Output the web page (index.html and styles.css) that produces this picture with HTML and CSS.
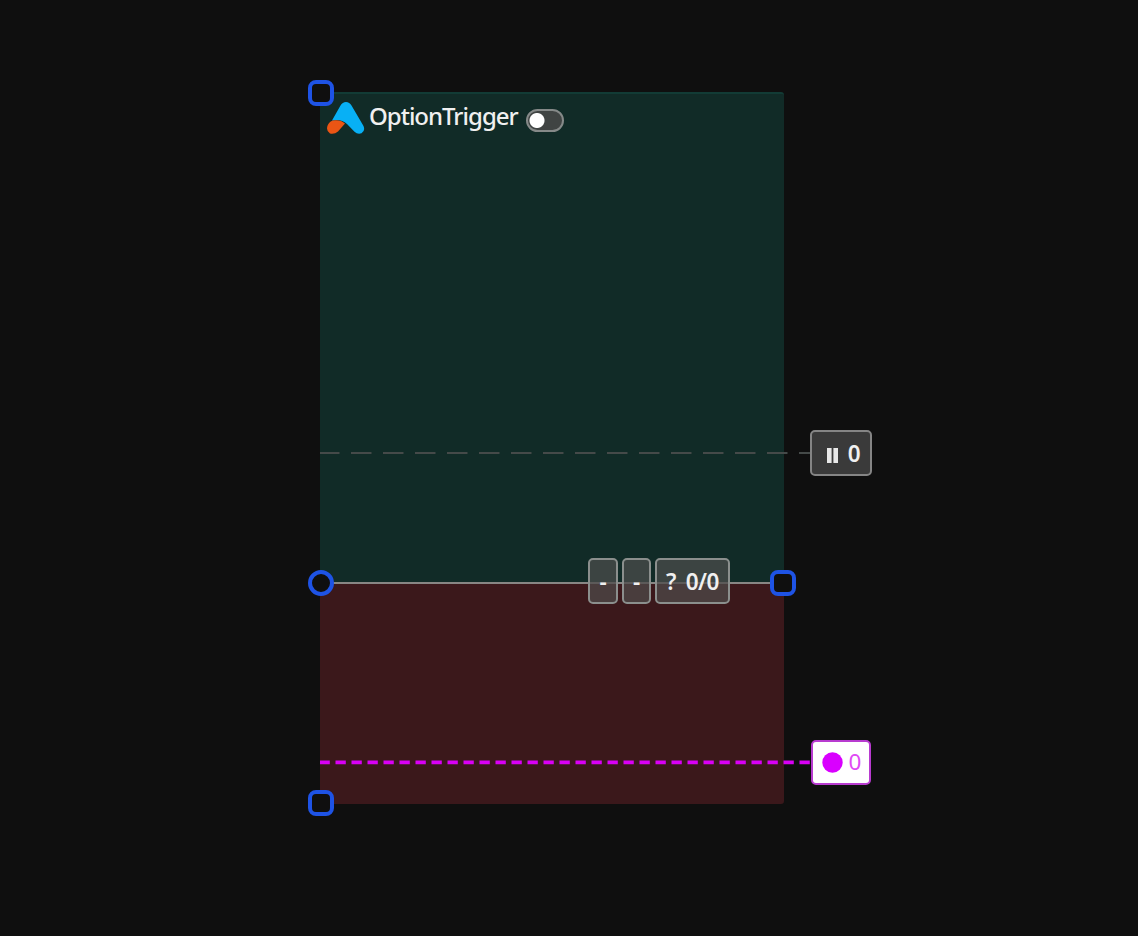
FILE: index.html
```html
<!DOCTYPE html>
<html lang="en">
<head>
  <meta charset="UTF-8">
  <meta name="viewport" content="width=device-width, initial-scale=1.0">
  <title>OptionTrigger</title>
  <link rel="stylesheet" href="styles.css">
</head>
<body>
  <div class="position">
    <!-- Profit zone -->
    <div class="profit">
      <div class="title">
        <svg class="logo" width="38" height="34" viewBox="0 0 38 34">
          <path d="M5 19.5 L13.5 4.5 Q15.5 1 19 1 Q22.5 1 24.5 4.5 L36.5 25 Q38.5 30 34.5 32.3 Q30.5 33.5 27.5 30.8 L20 23 Q14 17.5 5 19.5 Z" fill="#08b0f5"/>
          <path d="M.8 24 Q3 19.5 8 19.3 Q14 18.8 18 22.6 L11 30.5 Q7.5 33.5 3 32.5 Q-1.5 29.5 .8 24 Z" fill="#ea5514"/>
        </svg>
        <span class="name">OptionTrigger</span>
        <span class="toggle"></span>
      </div>
    </div>

    <!-- Loss zone -->
    <div class="loss"></div>

    <!-- Price lines -->
    <svg class="lines" width="492" height="712">
      <line x1="-1" y1="361" x2="491" y2="361" stroke="#454a49" stroke-width="1.8" stroke-dasharray="20.5 11.5"/>
      <line x1="0" y1="491" x2="463" y2="491" stroke="#888684" stroke-width="2"/>
      <line x1="-.5" y1="670.3" x2="491" y2="670.3" stroke="#d900f5" stroke-width="3.8" stroke-dasharray="10.3 5.7"/>
    </svg>

    <div class="stats">
      <span class="label dash">-</span>
      <span class="label dash">-</span>
      <span class="label ratio">? 0/0</span>
    </div>

    <div class="label pause">
      <svg width="11" height="15"><path d="M0 0h4.6v15H0zM6.4 0H11v15H6.4z" fill="#e8e8e8"/></svg>
      <span>0</span>
    </div>
    <div class="label trigger">
      <svg width="21" height="21"><circle cx="10.5" cy="10.5" r="10.2" fill="#d900ff"/></svg>
      <span>0</span>
    </div>

    <!-- Drag handles -->
    <span class="handle top"></span>
    <span class="handle entry"></span>
    <span class="handle right"></span>
    <span class="handle bottom"></span>
  </div>
</body>
</html>
```

FILE: styles.css
```css
body {
  box-sizing: border-box;
  min-height: 100vh;
  margin: 0;
  padding: 92px 0 0 320px;
  background-color: #0f0f0f;
  font-family: "Noto Sans", "Open Sans", sans-serif;
  color: #f0f0f0;
}

.position {
  position: relative;
  width: 464px;
}

.profit {
  box-sizing: border-box;
  height: 491px;
  background-color: #112b27;
  border-top: 2px solid #123b35;
  border-radius: 3px 3px 0 0;
}

.loss {
  height: 221px;
  background-color: #3b181b;
  border-radius: 0 0 3px 3px;
}

.title {
  display: flex;
  align-items: flex-start;
  padding: 7px 0 0 6.5px;
}

.logo {
  flex: none;
}

.name {
  width: 148px;
  margin: -1px 9px 0 4.5px;
  font-size: 24px;
  font-weight: 500;
  line-height: 32px;
  letter-spacing: -1px;
  white-space: nowrap;
}

.toggle {
  box-sizing: border-box;
  width: 38px;
  height: 23px;
  margin-top: 8px;
  border: 2px solid #858988;
  border-radius: 12px;
  background: radial-gradient(circle at 9px 9.5px, #fff 7px, #404443 8px);
}

.lines {
  position: absolute;
  top: 0;
  left: 0;
}

.label {
  box-sizing: border-box;
  display: flex;
  align-items: center;
  justify-content: center;
  height: 46px;
  border: 2px solid #858585;
  border-radius: 5px;
  background-color: #3a3a3a;
  font-size: 22.5px;
  font-weight: 600;
  letter-spacing: -0.5px;
}

.stats {
  position: absolute;
  top: 466px;
  left: 268px;
  display: flex;
  gap: 4px;
}

.stats .label {
  border-color: #8b8f8d;
  background: linear-gradient(#3c4442 22px, #5c5a59 22px, #5c5a59 24px, #493d3d 24px);
}

.stats .dash {
  width: 29.5px;
}

.stats .ratio {
  width: 75px;
  word-spacing: 4.5px;
}

.pause {
  position: absolute;
  top: 338px;
  left: 490px;
  width: 62px;
  padding-left: 5px;
  gap: 10px;
}

.pause svg {
  margin-top: 4px;
}

.trigger {
  position: absolute;
  top: 647.5px;
  left: 490.5px;
  width: 60.5px;
  height: 45px;
  padding-left: 1px;
  gap: 6px;
  border-color: #b83bd0;
  background-color: #fff;
  color: #e04af5;
  font-weight: 400;
}

.trigger span {
  margin-top: -1px;
}

.handle {
  position: absolute;
  box-sizing: border-box;
  width: 26px;
  height: 26px;
  border: 4px solid #1e53e5;
  border-radius: 8px;
  background-color: #0f0f0f;
}

.top {
  top: -12px;
  left: -12px;
}

.entry {
  top: 478px;
  left: -12px;
  border-radius: 50%;
}

.right {
  top: 478px;
  left: 450px;
}

.bottom {
  top: 698px;
  left: -12px;
}
```
